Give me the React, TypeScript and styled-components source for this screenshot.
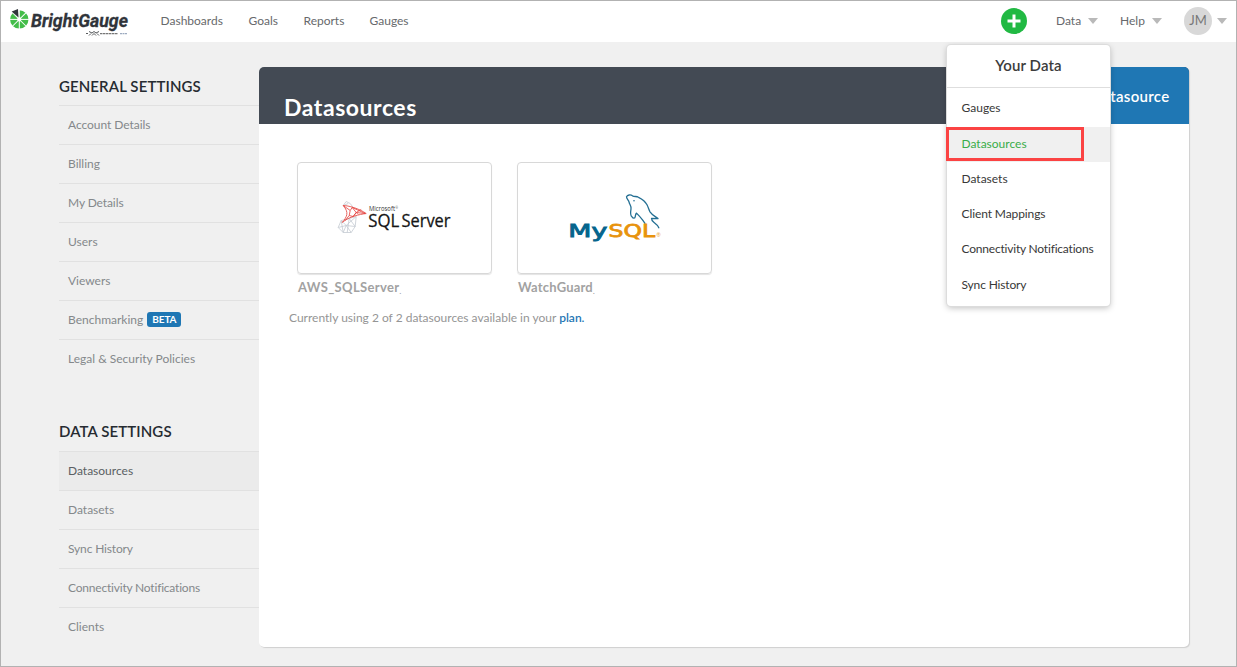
import React from "react";
import styled, { createGlobalStyle } from "styled-components";

const Global = createGlobalStyle`
  *, *::before, *::after { box-sizing: border-box; }
  body { margin: 0; background: #f0f0f0; font-family: Lato, "Open Sans", sans-serif; }
  svg { display: block; overflow: visible; }
`;

const Page = styled.div`
  width: 1237px;
  height: 667px;
  border: 1px solid #b2b2b2;
  background: #f0f0f0;
  overflow: hidden;
`;

const TopBar = styled.header`
  display: flex;
  align-items: center;
  height: 41px;
  background: #fff;
  padding: 0 9px 2px 8px;
`;

const MainNav = styled.nav`
  display: flex;
  gap: 25px;
  margin-left: 30.5px;
  flex: 1;
`;

const NavLink = styled.a<{ $width: number }>`
  width: ${(p) => p.$width}px;
  font-size: 12px;
  line-height: 18px;
  color: #67696c;
  white-space: nowrap;
`;

const Tools = styled.div`
  display: flex;
  align-items: center;
`;

const AddButton = styled.button`
  display: flex;
  align-items: center;
  justify-content: center;
  width: 26px;
  height: 26px;
  margin: 0 29px 0 0;
  padding: 0;
  border: 0;
  border-radius: 50%;
  background: #21b943;
`;

const MenuTrigger = styled.div<{ $gap: number; $after: number }>`
  display: flex;
  align-items: center;
  gap: ${(p) => p.$gap}px;
  margin-right: ${(p) => p.$after}px;
`;

const Caret = styled.span`
  width: 0;
  height: 0;
  border: 5px solid transparent;
  border-top: 6px solid #b9b9b9;
  border-bottom: 0;
`;

const Avatar = styled.span`
  display: flex;
  align-items: center;
  justify-content: center;
  width: 28px;
  height: 28px;
  padding-bottom: 1px;
  border-radius: 50%;
  background: #d8d8d8;
  color: #777;
  font-size: 13px;
`;

const Content = styled.div`
  display: flex;
  align-items: flex-start;
  padding: 25px 0 0 58px;
`;

const Sidebar = styled.aside`
  width: 200px;
  flex: none;
`;

const Section = styled.section`
  & + & { margin-top: 34px; }
`;

const SectionTitle = styled.h2<{ $height: number }>`
  height: ${(p) => p.$height}px;
  margin: 0;
  line-height: ${(p) => p.$height}px;
  font-size: 15px;
  font-weight: 600;
  letter-spacing: 0.1px;
  color: #262b31;
  white-space: nowrap;
`;

const SideItem = styled.a<{ $active?: boolean; $spacing: number }>`
  display: flex;
  align-items: center;
  gap: 5px;
  height: 39px;
  padding: 0 0 1px 9px;
  border-top: 1px solid #e1e1e1;
  background: ${(p) => (p.$active ? "#ebebeb" : "transparent")};
  color: ${(p) => (p.$active ? "#5a5f63" : "#84888b")};
  font-size: 12px;
  letter-spacing: ${(p) => p.$spacing}px;
  white-space: nowrap;
`;

const Beta = styled.span`
  height: 15px;
  margin-left: -1px;
  padding: 0 5px;
  border-radius: 3px;
  background: #1f77b4;
  color: #fff;
  font-size: 10px;
  font-weight: 700;
  letter-spacing: -0.1px;
  line-height: 15px;
`;

const Panel = styled.main`
  width: 930px;
  height: 580px;
  flex: none;
  border-radius: 5px;
  background: #fff;
  box-shadow: 1px 1px 1px #cfcfcf;
`;

const PanelHeader = styled.div`
  display: flex;
  justify-content: space-between;
  height: 57px;
  border-radius: 5px 5px 0 0;
  overflow: hidden;
  background: #434a54;
`;

const PanelTitle = styled.h1`
  margin: 0;
  padding: 24px 0 0 25px;
  font-size: 23px;
  line-height: 32px;
  font-weight: 700;
  letter-spacing: 0.55px;
  color: #fff;
`;

const NewButton = styled.button`
  width: 176px;
  margin: 0;
  padding: 0 19.5px 0 0;
  border: 0;
  background: #1f77b4;
  color: #fff;
  font: 600 15px Lato, sans-serif;
  letter-spacing: 0.3px;
  text-align: right;
  white-space: nowrap;
`;

const Cards = styled.div`
  display: flex;
  gap: 25px;
  padding: 38px 0 0 38px;
`;

const CardColumn = styled.div`
  width: 195px;
`;

const Card = styled.div`
  display: flex;
  align-items: center;
  justify-content: center;
  height: 112px;
  border: 1px solid #d8d8d8;
  border-radius: 4px;
  box-shadow: 0 1px 1px #e4e4e4;
`;

const CardName = styled.div<{ $spacing: number }>`
  padding: 4px 0 0 1px;
  font-size: 13px;
  font-weight: 700;
  line-height: 18px;
  color: #a2a2a2;
  letter-spacing: ${(p) => p.$spacing}px;
`;

const Tail = styled.span`
  position: relative;
  top: 2px;
  font-size: 7px;
  letter-spacing: 0;
`;

const Usage = styled.p`
  margin: 11px 0 0 30px;
  font-size: 12px;
  line-height: 18px;
  color: #959595;
`;

const PlanLink = styled.a`
  color: #1f77b4;
  font-weight: 600;
`;

const Dropdown = styled.div`
  position: absolute;
  left: 947px;
  top: 45px;
  width: 163px;
  height: 261px;
  border-radius: 4px;
  background: #fff;
  box-shadow: 0 0 0 1px #dcdcdc, 0 2px 6px rgba(0, 0, 0, 0.25);
`;

const DropdownTitle = styled.div`
  height: 43px;
  border-bottom: 1px solid #dedede;
  font-size: 15px;
  font-weight: 600;
  letter-spacing: 0.1px;
  line-height: 41px;
  text-align: center;
  color: #3c3c3c;
`;

const DropdownList = styled.div`
  padding-top: 3.5px;
`;

const DropdownItem = styled.a<{ $active?: boolean; $spacing: number }>`
  display: flex;
  align-items: center;
  height: 35.25px;
  padding: 0 0 2.5px 14.5px;
  background: ${(p) => (p.$active ? "#f0f0f0" : "transparent")};
  color: ${(p) => (p.$active ? "#39ad49" : "#383838")};
  font-size: 12px;
  letter-spacing: ${(p) => p.$spacing}px;
  white-space: nowrap;
`;

const Callout = styled.div`
  position: absolute;
  left: -1px;
  top: 82px;
  width: 138px;
  height: 34px;
  border: 3px solid #fb4343;
`;

const BrightGaugeLogo = () => (
  <svg width="121" height="34" viewBox="0 0 121 34">
    <g transform="translate(10.3 15.4)">
      <circle r="9.2" fill="#43bd49" />
      {[0, 45, 90, 135].map((a) => (
        <path key={a} d="M0-9.7V9.7" stroke="#fff" strokeWidth="1" transform={`rotate(${a})`} />
      ))}
      <circle r="2.1" fill="#fff" />
      <path d="M-.3-1-9-9.3-.3-11z" fill="#fff" />
      <path d="M-.8-1.8-7.6-7.8-1.3-10.4z" fill="#30343a" />
    </g>
    <text x="22" y="23.2" textLength="97" lengthAdjust="spacingAndGlyphs" fontFamily="Roboto, sans-serif" fontSize="18.5" fontWeight="700" fontStyle="italic" fill="#30343a" stroke="#30343a" strokeWidth=".3">BrightGauge</text>
    <path d="M77 29.500h2M80 27.500l3 1.500 2-1.500 2 1.500 3-1.500M80 31.500l2-2M90 31.500l-2-2M83 31.500l2-2 2 2" stroke="#44474a" strokeWidth=".9" fill="none" />
    <path d="M91 29.600h18" stroke="#777" strokeWidth="1.2" strokeDasharray="2.5 .5" />
    <path d="M111 29.600h7" stroke="#9dabc0" strokeWidth="1.1" strokeDasharray="2 .5" />
  </svg>
);

const SqlServerLogo = () => (
  <svg width="114" height="34" viewBox="0 0 114 34">
    <g fill="none" strokeLinejoin="round" transform="translate(-.8 -.5)">
      <path d="M6 5 9 1l4 2 3 4M6 5l5-2M4 20l8-2 7-2-1 10-4 6-8 0-5-5zM4 20l5 5 10-9M9 25l-3 7M9 25l9 1M1 27l8-2 5 7M12 18l-2 14M12 18l6 8M4 20l2 12" stroke="#c4cad2" strokeWidth=".8" />
      <path d="M6 5c5 0 16 3 23 8-7 1-17 3-24 9C10 16 12 12 6 5z" stroke="#e8635e" strokeWidth="1" />
      <path d="M6 5l7 5 2-3 4 5-3 4-4-1 1-5M15 7l13 6-9-1 5-3M19 12l2 2M12 15l-4 5M16 16l3-4" stroke="#e4403c" strokeWidth=".8" />
    </g>
    <text x="31" y="10.2" textLength="26" lengthAdjust="spacingAndGlyphs" fontFamily="Open Sans, sans-serif" fontSize="6.5" fill="#333">Microsoft</text>
    <text x="57.5" y="8.2" fontFamily="Open Sans, sans-serif" fontSize="3" fill="#555">®</text>
    <text x="30.3" y="25.8" textLength="31" lengthAdjust="spacingAndGlyphs" fontFamily="Open Sans, sans-serif" fontSize="19" fill="#151515" stroke="#151515" strokeWidth=".3">SQL</text>
    <text x="63.5" y="25.8" textLength="49" lengthAdjust="spacingAndGlyphs" fontFamily="Open Sans, sans-serif" fontSize="19" fill="#151515" stroke="#151515" strokeWidth=".3">Server</text>
  </svg>
);

const MySqlLogo = () => (
  <svg width="94" height="50" viewBox="0 0 94 50">
    <g transform="translate(-.5 .8)">
      <path d="M59 3c1-2 4-2.500 6-1 2 1 4 .4 6 1.500 4 2 7 4.500 8.500 7.500 1.500 3 1.800 5 3 7 2 3 5 4.500 8 6.800l-6.500-.3c0 2 1 3 2.300 4 2 1.500 4 3 5 5.500M59 3c0 2 2 3 2.500 5 .5 3 2.500 4 2 7-.5 3-.5 7 1 8 1 1.500 3 2 3.200 0 .3-2 .3-3 1.300-3.700 2 2 4 4 6 6.700 1 1.500 1.500 2 2.500 3.500" fill="none" stroke="#246f93" strokeWidth="1.3" strokeLinejoin="round" strokeLinecap="round" />
      <circle cx="66.500" cy="7" r=".8" fill="#246f93" />
    </g>
    <text x="0.300" y="44" textLength="39" lengthAdjust="spacingAndGlyphs" fontFamily="DejaVu Sans, sans-serif" fontSize="18.500" fill="#05658d" stroke="#05658d" strokeWidth=".9">My</text>
    <text x="40.500" y="44" textLength="46.500" lengthAdjust="spacingAndGlyphs" fontFamily="DejaVu Sans, sans-serif" fontSize="18.500" fill="#e8930c" stroke="#e8930c" strokeWidth=".8">SQL</text>
    <text x="88.500" y="44" fontFamily="Liberation Sans, sans-serif" fontSize="5.500" fill="#e8930c">®</text>
  </svg>
);

type Entry = { label: string; spacing?: number; beta?: boolean };

const general: Entry[] = [
  { label: "Account Details", spacing: -0.05 },
  { label: "Billing" },
  { label: "My Details", spacing: -0.1 },
  { label: "Users" },
  { label: "Viewers" },
  { label: "Benchmarking", beta: true },
  { label: "Legal & Security Policies" },
];

const data: Entry[] = [
  { label: "Datasources" },
  { label: "Datasets" },
  { label: "Sync History", spacing: -0.15 },
  { label: "Connectivity Notifications", spacing: -0.2 },
  { label: "Clients" },
];

const menu: Entry[] = [
  { label: "Gauges" },
  { label: "Datasources" },
  { label: "Datasets" },
  { label: "Client Mappings", spacing: -0.1 },
  { label: "Connectivity Notifications", spacing: -0.2 },
  { label: "Sync History", spacing: -0.15 },
];

export default function App() {
  return (
    <>
      <Global />
      <Page>
        <TopBar>
          <BrightGaugeLogo />
          <MainNav>
            <NavLink $width={63}>Dashboards</NavLink>
            <NavLink $width={30}>Goals</NavLink>
            <NavLink $width={41}>Reports</NavLink>
            <NavLink $width={41}>Gauges</NavLink>
          </MainNav>
          <Tools>
            <AddButton aria-label="Add">
              <svg width="14" height="14" viewBox="0 0 14 14"><path d="M7 .5v13M.5 7h13" stroke="#fff" strokeWidth="3" /></svg>
            </AddButton>
            <MenuTrigger $gap={7} $after={22}><NavLink $width={25}>Data</NavLink><Caret /></MenuTrigger>
            <MenuTrigger $gap={7} $after={22}><NavLink $width={25}>Help</NavLink><Caret /></MenuTrigger>
            <MenuTrigger $gap={5} $after={0}><Avatar>JM</Avatar><Caret /></MenuTrigger>
          </Tools>
        </TopBar>
        <Content>
          <Sidebar>
            <Section>
              <SectionTitle $height={38}>GENERAL SETTINGS</SectionTitle>
              {general.map((e) => (
                <SideItem key={e.label} $spacing={e.spacing ?? 0}>{e.label}{e.beta && <Beta>BETA</Beta>}</SideItem>
              ))}
            </Section>
            <Section>
              <SectionTitle $height={39}>DATA SETTINGS</SectionTitle>
              {data.map((e, i) => (
                <SideItem key={e.label} $active={i === 0} $spacing={e.spacing ?? 0}>{e.label}</SideItem>
              ))}
            </Section>
          </Sidebar>
          <Panel>
            <PanelHeader>
              <PanelTitle>Datasources</PanelTitle>
              <NewButton>+ New Datasource</NewButton>
            </PanelHeader>
            <Cards>
              <CardColumn>
                <Card><SqlServerLogo /></Card>
                <CardName $spacing={0.35}>AWS_SQLServer<Tail>.</Tail></CardName>
              </CardColumn>
              <CardColumn>
                <Card><MySqlLogo /></Card>
                <CardName $spacing={0.2}>WatchGuard<Tail>.</Tail></CardName>
              </CardColumn>
            </Cards>
            <Usage>Currently using 2 of 2 datasources available in your <PlanLink>plan.</PlanLink></Usage>
          </Panel>
        </Content>
        <Dropdown>
          <DropdownTitle>Your Data</DropdownTitle>
          <DropdownList>
            {menu.map((e, i) => (
              <DropdownItem key={e.label} $active={i === 1} $spacing={e.spacing ?? 0}>{e.label}</DropdownItem>
            ))}
          </DropdownList>
          <Callout />
        </Dropdown>
      </Page>
    </>
  );
}
